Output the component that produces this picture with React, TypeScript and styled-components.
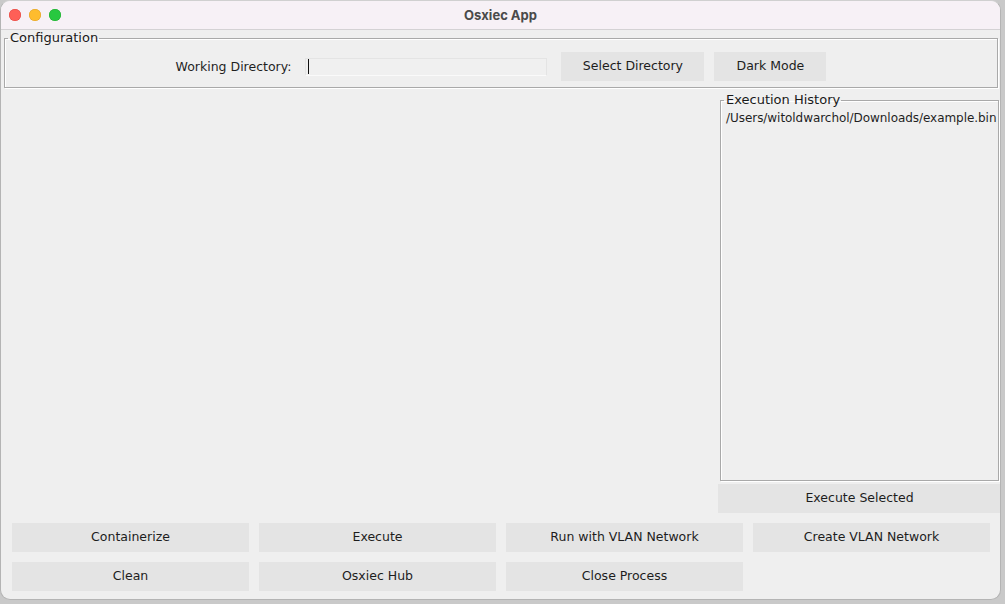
import styled, { createGlobalStyle } from 'styled-components'

const GlobalStyle = createGlobalStyle`
  html, body {
    margin: 0;
    padding: 0;
    background: #c9c9c9;
    width: 1005px;
    height: 604px;
    overflow: hidden;
  }
  * {
    box-sizing: border-box;
  }
`

const FONT = `"DejaVu Sans", "Liberation Sans", sans-serif`

const Window = styled.div`
  width: 1001px;
  height: 600px;
  border: 1px solid #b4b4b4;
  border-top-color: #d0d0d0;
  border-radius: 10px;
  overflow: hidden;
  display: flex;
  flex-direction: column;
  background: #efefef;
  font-family: ${FONT};
  font-size: 12.5px;
  color: #1f1f1f;
`

const TitleBar = styled.div`
  position: relative;
  height: 29px;
  flex: none;
  background: #f7f1f6;
  border-bottom: 1px solid #d4d2d4;
  display: flex;
  align-items: center;
  justify-content: center;
`

const Lights = styled.div`
  position: absolute;
  left: 8px;
  top: 8px;
  display: flex;
  gap: 8px;
`

const Light = styled.span<{ $color: string; $edge: string }>`
  width: 12px;
  height: 12px;
  border-radius: 50%;
  background: ${(p) => p.$color};
  box-shadow: inset 0 0 0 0.5px ${(p) => p.$edge};
`

const Title = styled.div`
  font-family: "Inter", "Liberation Sans", sans-serif;
  font-weight: 700;
  font-size: 13px;
  color: #4a4a4a;
`

const Group = styled.fieldset`
  margin: 0;
  min-width: 0;
  border: 1px solid #a9a9a9;
  box-shadow: inset 1px 1px 0 #ffffff, 1px 1px 0 #ffffff;
  padding: 0;
`

const Legend = styled.legend`
  margin-left: 3px;
  padding: 0 1px 0 2px;
  font-size: 13px;
  line-height: 14px;
  color: #1a1a1a;
`

const ConfigGroup = styled(Group)`
  margin: 1px 2px 0 3px;
  height: 61px;
`

const ConfigRow = styled.div`
  display: flex;
  align-items: center;
  justify-content: center;
  padding: 7px 0 0 0;
`

const FieldLabel = styled.span`
  margin-right: 14px;
`

const TextField = styled.div`
  width: 242px;
  height: 18px;
  background: #f0f0f0;
  border: 1px solid #e4e4e4;
  border-bottom-color: #fafafa;
  margin-right: 14px;
  display: flex;
  align-items: center;
  padding-left: 2px;
`

const Caret = styled.span`
  width: 1px;
  height: 15px;
  background: #111;
`

const Button = styled.div<{ $width?: number; $gap?: number }>`
  height: 29px;
  ${(p) => (p.$width ? `width: ${p.$width}px;` : '')}
  ${(p) => (p.$gap ? `margin-right: ${p.$gap}px;` : '')}
  padding-bottom: 2px;
  background: #e4e4e4;
  display: flex;
  align-items: center;
  justify-content: center;
  color: #1d1d1d;
  white-space: nowrap;
  cursor: default;
`

const Main = styled.div`
  flex: 1;
  display: flex;
  justify-content: flex-end;
  padding-top: 5px;
`

const SideColumn = styled.div`
  width: 283px;
  display: flex;
  flex-direction: column;
  margin-right: -1px;
`

const HistoryGroup = styled(Group)`
  margin: 0 2px 0 2px;
  height: 388px;
`

const HistoryItem = styled.div`
  padding: 4px 0 0 5px;
  line-height: 15px;
  font-size: 12px;
  letter-spacing: -0.05px;
  white-space: nowrap;
`

const ExecuteSelected = styled(Button)`
  margin-top: 3px;
`

const ButtonGrid = styled.div`
  display: grid;
  grid-template-columns: repeat(4, 237px);
  column-gap: 10px;
  row-gap: 10px;
  padding: 10px 0 8px 11px;
`

const TrafficLights = () => (
  <Lights>
    <Light $color="#fe5f57" $edge="#e0443e" />
    <Light $color="#febc2e" $edge="#dea123" />
    <Light $color="#28c840" $edge="#1aab29" />
  </Lights>
)

const actions = [
  'Containerize',
  'Execute',
  'Run with VLAN Network',
  'Create VLAN Network',
  'Clean',
  'Osxiec Hub',
  'Close Process',
]

export default function App() {
  return (
    <>
      <GlobalStyle />
      <Window>
        <TitleBar>
          <TrafficLights />
          <Title>Osxiec App</Title>
        </TitleBar>

        <ConfigGroup>
          <Legend>Configuration</Legend>
          <ConfigRow>
            <FieldLabel>Working Directory:</FieldLabel>
            <TextField>
              <Caret />
            </TextField>
            <Button $width={143} $gap={10}>Select Directory</Button>
            <Button $width={112}>Dark Mode</Button>
          </ConfigRow>
        </ConfigGroup>

        <Main>
          <SideColumn>
            <HistoryGroup>
              <Legend>Execution History</Legend>
              <HistoryItem>/Users/witoldwarchol/Downloads/example.bin</HistoryItem>
            </HistoryGroup>
            <ExecuteSelected>Execute Selected</ExecuteSelected>
          </SideColumn>
        </Main>

        <ButtonGrid>
          {actions.map((label) => (
            <Button key={label}>{label}</Button>
          ))}
        </ButtonGrid>
      </Window>
    </>
  )
}
